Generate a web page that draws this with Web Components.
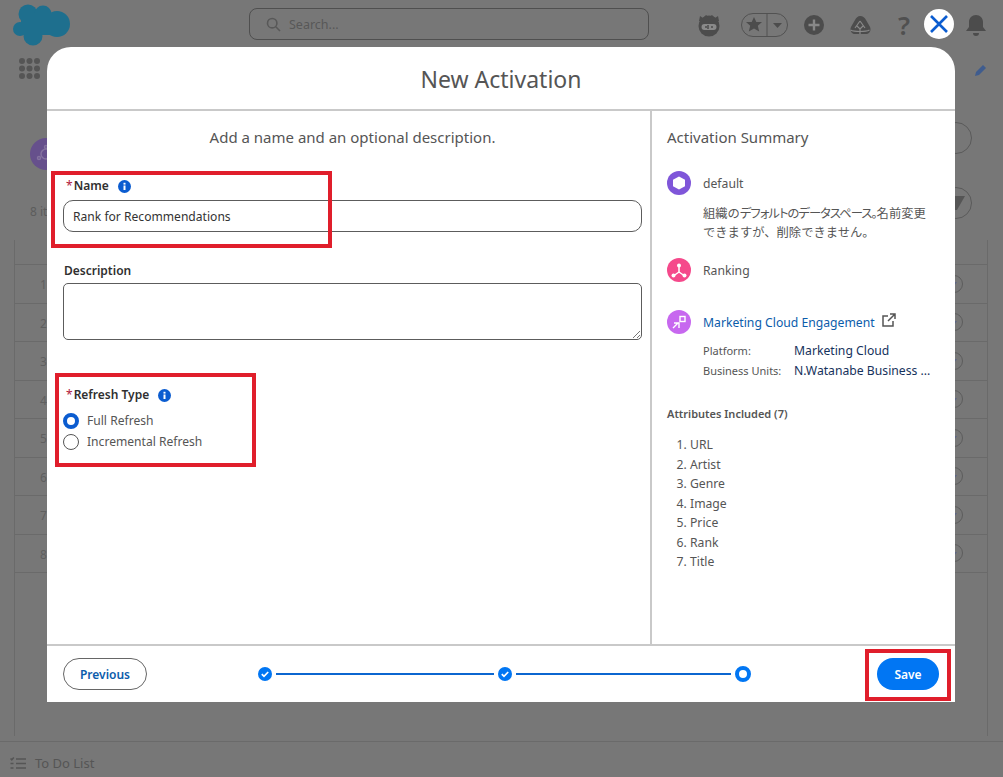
<!DOCTYPE html>
<html lang="en">
<head>
<meta charset="utf-8">
<title>New Activation</title>
<style>
  html, body { margin: 0; height: 100%; }
  body { background: #777; overflow: hidden; font-family: "Noto Sans", "Noto Sans CJK JP", sans-serif; }
</style>
</head>
<body>
<app-shell></app-shell>
<activation-modal>
  <activation-form slot="form"></activation-form>
  <activation-summary slot="summary"></activation-summary>
</activation-modal>

<script>
const appTemplate = document.createElement('template');
appTemplate.innerHTML = `
<style>
  :host { display: flex; flex-direction: column; height: 777px; color: #5a5a5a; font-size: 12.500px; }
  .top { height: 50px; display: flex; align-items: center; padding-left: 13px; box-sizing: border-box; }
  .logo { width: 58px; height: 46px; margin-top: -2px; flex: none; }
  .search { margin-left: 178px; width: 400px; height: 32px; border: 1px solid #4f4f4f; border-radius: 8px; display: flex; align-items: center; gap: 8px; padding-left: 16px; color: #585858; margin-top: -2px; box-sizing: border-box; flex: none; }
  .tools { margin-left: auto; margin-right: 16px; display: flex; align-items: center; }
  .nav { height: 38px; display: flex; align-items: center; padding-left: 19px; justify-content: space-between; padding-right: 16px; }
  .main { flex: 1; padding: 0 15px 5px 14px; display: flex; flex-direction: column; min-height: 0; }
  .head { height: 152px; flex: none; display: flex; justify-content: space-between; }
  .title { padding: 50px 0 0 16px; }
  .badge { width: 32px; height: 32px; border-radius: 50%; background: #66508c; display: flex; align-items: center; justify-content: center; }
  .count { margin-top: 33px; font-size: 12px; color: #5c5c5c; }
  .actions { padding: 34px 16px 0 0; display: flex; flex-direction: column; gap: 33px; }
  .round { width: 32px; height: 32px; border: 1px solid #5a5a5a; border-radius: 50%; box-sizing: border-box; display: flex; align-items: center; justify-content: center; }
  .table { flex: 1; border-left: 1px solid #6a6a6a; border-right: 1px solid #6a6a6a; }
  .caption { height: 24px; }
  .row { height: 37.500px; border-top: 1px solid #6a6a6a; display: flex; align-items: center; justify-content: space-between; padding: 0 24px 0 25px; font-size: 12px; color: #5f5f5f; box-sizing: content-box; }
  .row span { padding-top: 2px; }
  .row i { width: 18px; height: 18px; border: 1px solid #5c5c5c; border-radius: 50%; box-sizing: border-box; display: flex; align-items: center; justify-content: center; margin-left: auto; }
  .row i::after { content: ""; border: 3px solid transparent; border-top: 4px solid #5d6585; margin-top: 4px; }
  .bar { height: 36px; border-top: 1px solid #6a6a6a; display: flex; align-items: center; gap: 9px; padding: 7px 0 0 10px; box-sizing: border-box; color: #555; font-size: 13px; flex: none; }
</style>
<div class="top">
  <svg class="logo" viewBox="0 0 58 46" fill="#1e6f8e">
    <circle cx="15" cy="13" r="9.500"/><circle cx="30" cy="13" r="8.500"/><circle cx="44" cy="23" r="13"/>
    <circle cx="7" cy="28" r="7"/><circle cx="20" cy="35" r="9.500"/><rect x="8" y="12" width="36" height="22"/>
  </svg>
  <div class="search">
    <svg width="15" height="15" viewBox="0 0 15 15" fill="none" stroke="#585858" stroke-width="1.600"><circle cx="6.200" cy="6.200" r="4.700"/><path d="M9.800 9.800l4.200 4.200"/></svg>
    <span>Search...</span>
  </div>
  <div class="tools">
    <svg width="269" height="40" viewBox="0 -5 269 40">
      <circle cx="19" cy="16" r="10.500" fill="#4c4c4c"/>
      <path fill="#4c4c4c" d="M9 11l1-5 3 2 3-3 3 2 3-2 3 3 3-2 1 5z"/>
      <rect x="11.500" y="14" width="15" height="6" rx="3" fill="#8a8a8a"/><path d="M15 17h2M21 17h2M18 15v4" stroke="#4c4c4c" stroke-width="1.500"/>
      <rect x="51.500" y="3.500" width="46" height="23" rx="11.500" fill="none" stroke="#525252"/><path d="M77 3.500v23" stroke="#525252"/>
      <path fill="#4c4c4c" d="M64 7l2.300 5h5.700l-4.200 3.800 1.400 5.700-5.200-3-5.200 3 1.400-5.700-4.200-3.800h5.700z"/><path fill="#4c4c4c" d="M83 13h9l-4.500 5z"/>
      <circle cx="124" cy="15" r="10" fill="#4c4c4c"/><path d="M124 9.500v11M118.500 15h11" stroke="#888" stroke-width="2.400"/>
      <path fill="#4c4c4c" d="M170 6c3 0 5 2 6 4l3.500 6c2 3 1 7-2.500 8h-13c-3.500-1-4.500-5-2.500-8l3.500-6c1-2 3-4 5-4z"/>
      <path d="M170 11l-5 7M170 11l5 7M167 16l3 3 3-3M170 19v5M160.500 20c3 1.500 6 1.500 9.500 1.500s6.500 0 9.500-1.500" stroke="#888" stroke-width="1.200" fill="none"/>
      <text x="214" y="25" text-anchor="middle" font-size="26" font-weight="600" fill="#505050" font-family="Noto Sans">?</text>
    </svg>
    <svg width="22" height="24" viewBox="0 0 22 24" style="margin-left:6px"><path fill="#4c4c4c" d="M11 2c4 0 7 3 7 7v5l3 4H1l3-4V9c0-4 3-7 7-7zM8 20h6c0 2-1 3-3 3s-3-1-3-3z"/></svg>
  </div>
</div>
<div class="nav">
  <svg width="21" height="21" viewBox="0 0 21 21" fill="#555" style="margin-top:-1px">
    <circle cx="3" cy="3" r="3"/><circle cx="10.500" cy="3" r="3"/><circle cx="18" cy="3" r="3"/>
    <circle cx="3" cy="10.500" r="3"/><circle cx="10.500" cy="10.500" r="3"/><circle cx="18" cy="10.500" r="3"/>
    <circle cx="3" cy="18" r="3"/><circle cx="10.500" cy="18" r="3"/><circle cx="18" cy="18" r="3"/>
  </svg>
  <svg width="13" height="14" viewBox="0 0 13 14" style="margin-top:2px"><path fill="#3f5c8e" d="M1 13l1-4 7-7 3 3-7 7z"/></svg>
</div>
<div class="main">
  <div class="head">
    <div class="title">
      <div class="badge"><svg width="20" height="20" viewBox="0 0 20 20" fill="none" stroke="#84729f" stroke-width="1.500"><circle cx="10" cy="10" r="5"/><circle cx="10" cy="3" r="1.500"/><circle cx="3" cy="14" r="1.500"/><circle cx="17" cy="14" r="1.500"/></svg></div>
      <div class="count">8 items</div>
    </div>
    <div class="actions">
      <div class="round"></div>
      <div class="round"><svg width="18" height="14" viewBox="0 0 18 14"><path fill="#555" d="M0 0h18L10 14H8z"/></svg></div>
    </div>
  </div>
  <div class="table">
    <div class="caption"></div>
    <div class="row"><span>1</span><i></i></div><div class="row"><span>2</span><i></i></div><div class="row"><span>3</span><i></i></div><div class="row"><span>4</span><i></i></div>
    <div class="row"><span>5</span><i></i></div><div class="row"><span>6</span><i></i></div><div class="row"><span>7</span><i></i></div><div class="row"><span>8</span><i></i></div>
    <div class="row"></div>
  </div>
</div>
<div class="bar">
  <svg width="16" height="13" viewBox="0 0 16 13" fill="none" stroke="#555" stroke-width="1.500"><path d="M6 2h10M6 6.500h10M6 11h10M0.500 1.500l1.300 1.300 2-2.300M0.500 6.500h3M0.500 11h3"/></svg>
  <span>To Do List</span>
</div>`;

class AppShell extends HTMLElement {
  constructor() {
    super();
    this.attachShadow({mode: "open"});
    this.shadowRoot.appendChild(appTemplate.content.cloneNode(true));
  }
}
customElements.define("app-shell", AppShell);

const modalTemplate = document.createElement('template');
modalTemplate.innerHTML = `
<style>
  :host { position: absolute; left: 47px; top: 47px; width: 908px; height: 655px; display: flex; flex-direction: column; background: #fff; border-radius: 24px 24px 0 0; color: #444; }
  h1 { margin: 0; height: 62px; line-height: 64px; flex: none; text-align: center; font-size: 23px; font-weight: 400; color: #555; border-bottom: 2px solid #c9c9c9; }
  .body { flex: 1; display: flex; min-height: 0; }
  .left { width: 605px; flex: none; border-right: 2px solid #c9c9c9; box-sizing: border-box; }
  .right { flex: 1; }
  footer { height: 58px; flex: none; border-top: 2px solid #c9c9c9; display: flex; align-items: flex-start; padding: 12px 16px 0; box-sizing: border-box; justify-content: space-between; }
  button { font: 600 12px "Noto Sans", sans-serif; height: 32px; border-radius: 16px; }
  .prev { width: 84px; background: #fff; border: 1px solid #666; color: #0b5cab; }
  .save { width: 62px; background: #0176f3; border: 0; color: #fff; }
  .steps { display: flex; align-items: center; height: 32px; margin-left: -15px; }
  .line { height: 2px; background: #0b66d0; width: 218px; margin: 0 4px; }
  .line + svg + .line { width: 215px; }
  .ring { width: 16px; height: 16px; border-radius: 50%; border: 4px solid #0176f3; box-sizing: border-box; }
  .close { position: absolute; left: 877px; top: -38px; width: 30px; height: 30px; background: #fff; border-radius: 50%; display: flex; align-items: center; justify-content: center; }
  .mark { position: absolute; border: 4px solid #e01e2b; box-sizing: border-box; pointer-events: none; }
</style>
<h1>New Activation</h1>
<div class="body">
  <div class="left"><slot name="form"></slot></div>
  <div class="right"><slot name="summary"></slot></div>
</div>
<footer>
  <button class="prev">Previous</button>
  <div class="steps">
    <svg width="14" height="14" viewBox="0 0 14 14"><circle cx="7" cy="7" r="7" fill="#0176f3"/><path d="M3.800 7.200l2.200 2.200 4.200-4.400" fill="none" stroke="#fff" stroke-width="1.700"/></svg>
    <div class="line"></div>
    <svg width="14" height="14" viewBox="0 0 14 14"><circle cx="7" cy="7" r="7" fill="#0176f3"/><path d="M3.800 7.200l2.200 2.200 4.200-4.400" fill="none" stroke="#fff" stroke-width="1.700"/></svg>
    <div class="line"></div>
    <div class="ring"></div>
  </div>
  <button class="save">Save</button>
</footer>
<div class="close">
  <svg width="20" height="20" viewBox="0 0 20 20"><path d="M2 2l16 16M18 2L2 18" stroke="#0b5cd0" stroke-width="2.600" fill="none"/></svg>
</div>
<div class="mark" style="left:4px;top:124px;width:281px;height:77px"></div>
<div class="mark" style="left:8px;top:326px;width:201px;height:94px"></div>
<div class="mark" style="left:818px;top:602px;width:86px;height:52px"></div>`;

class ActivationModal extends HTMLElement {
  constructor() {
    super();
    this.attachShadow({mode: "open"});
    this.shadowRoot.appendChild(modalTemplate.content.cloneNode(true));
  }
}
customElements.define("activation-modal", ActivationModal);

const infoIcon = `<svg width="13" height="13" viewBox="0 0 13 13"><circle cx="6.500" cy="6.500" r="6.500" fill="#0b5cd0"/><rect x="5.500" y="5.500" width="2" height="4.500" fill="#fff"/><rect x="5.500" y="2.800" width="2" height="1.800" fill="#fff"/></svg>`;

const formTemplate = document.createElement('template');
formTemplate.innerHTML = `
<style>
  :host { display: block; padding: 15px 8px 0 16px; font-size: 12.100px; color: #444; }
  p { margin: 0 0 29px; text-align: center; font-size: 15px; line-height: 22px; color: #555; }
  label { display: flex; align-items: center; gap: 9px; font-weight: 600; font-size: 12px; line-height: 18px; color: #303030; height: 18px; }
  label span { display: inline-flex; gap: 1px; }
  label b { color: #b0183c; font-weight: 400; padding-left: 3px; }
  .input { height: 32px; margin: 5px 0 30px; border: 1px solid #5c5c5c; border-radius: 10px; display: flex; align-items: center; padding-left: 9px; color: #333; box-sizing: border-box; }
  .desc-label { padding-left: 1px; }
  .area { height: 57px; margin: 3px 0 46px; border: 1px solid #5c5c5c; border-radius: 5px; position: relative; box-sizing: border-box; }
  .area svg { position: absolute; right: 1px; bottom: 1px; }
  .radio { display: flex; align-items: center; gap: 8px; height: 21px; color: #555; }
  .radio i { width: 16px; height: 16px; border-radius: 50%; border: 1px solid #555; box-sizing: border-box; }
  .radio i.on { border: 4px solid #0b5cd0; }
  .radios { margin-top: 6px; }
</style>
<p>Add a name and an optional description.</p>
<label><span><b>*</b>Name</span>${infoIcon}</label>
<div class="input">Rank for Recommendations</div>
<label class="desc-label">Description</label>
<div class="area"><svg width="8" height="8" viewBox="0 0 8 8"><path d="M1 8l7-7M5 8l3-3" stroke="#777"/></svg></div>
<label><span><b>*</b>Refresh Type</span>${infoIcon}</label>
<div class="radios">
  <div class="radio"><i class="on"></i>Full Refresh</div>
  <div class="radio"><i></i>Incremental Refresh</div>
</div>`;

class ActivationForm extends HTMLElement {
  constructor() {
    super();
    this.attachShadow({mode: "open"});
    this.shadowRoot.appendChild(formTemplate.content.cloneNode(true));
  }
}
customElements.define("activation-form", ActivationForm);

const summaryTemplate = document.createElement('template');
summaryTemplate.innerHTML = `
<style>
  :host { display: block; padding: 15px 16px 0 15px; font-size: 12.200px; color: #555; }
  h2 { margin: 0 0 23px; font-size: 15px; font-weight: 400; line-height: 22px; color: #555; }
  .item { display: flex; align-items: center; gap: 12px; height: 24px; }
  .desc { margin: 9px 0 16px 36px; font-size: 12.300px; line-height: 19px; font-family: "Noto Sans CJK JP", sans-serif; white-space: nowrap; }
  .desc span { font-feature-settings: "palt"; letter-spacing: -0.950px; }
  a { color: #0b5cab; text-decoration: none; }
  .link { display: flex; align-items: center; gap: 7px; }
  .meta { margin: 7px 0 24px 36px; display: grid; grid-template-columns: 91px 1fr; line-height: 20px; }
  .meta span { font-size: 11px; color: #555; }
  .meta strong { font-weight: 400; color: #16325c; white-space: nowrap; }
  h3 { margin: 0 0 12px; font-size: 11px; font-weight: 600; line-height: 18px; color: #555; }
  ol { margin: 0; padding: 0 0 0 23px; line-height: 19.500px; }
</style>
<h2>Activation Summary</h2>
<div class="item">
  <svg width="24" height="24" viewBox="0 0 24 24"><circle cx="12" cy="12" r="12" fill="#7f56d9"/><path fill="#fff" d="M12 5.500l6 3.300v6.400l-6 3.300-6-3.300V8.800z"/></svg>
  <span>default</span>
</div>
<div class="desc">組織の<span>デフォルトのデータスペース。</span>名前変更<br>できますが、削除できません。</div>
<div class="item" style="margin-bottom:28px">
  <svg width="24" height="24" viewBox="0 0 24 24"><circle cx="12" cy="12" r="12" fill="#f5498b"/><path d="M12 7.500v6.500M12 14l-5 3.500M12 14l5 3.500" stroke="#fff" stroke-width="1.500" fill="none"/><circle cx="12" cy="7.500" r="2" fill="#fff"/><circle cx="6.500" cy="17.500" r="2" fill="#fff"/><circle cx="17.500" cy="17.500" r="2" fill="#fff"/></svg>
  <span>Ranking</span>
</div>
<div class="item">
  <svg width="24" height="24" viewBox="0 0 24 24"><circle cx="12" cy="12" r="12" fill="#c768ef"/><rect x="13" y="6.500" width="5" height="5" fill="none" stroke="#fff" stroke-width="1.400"/><path d="M6 18l5.500-5.500M7 13h5v5" stroke="#fff" stroke-width="1.400" fill="none"/></svg>
  <span class="link"><a href="#">Marketing Cloud Engagement</a>
    <svg width="14" height="14" viewBox="0 0 14 14" fill="none" stroke="#555" stroke-width="1.500" style="margin-top:-4px"><path d="M6 3H1v10h10V8M8 1h5v5M13 1L6 8"/></svg>
  </span>
</div>
<div class="meta">
  <span>Platform:</span><strong>Marketing Cloud</strong>
  <span>Business Units:</span><strong>N.Watanabe Business ...</strong>
</div>
<h3>Attributes Included (7)</h3>
<ol><li>URL</li><li>Artist</li><li>Genre</li><li>Image</li><li>Price</li><li>Rank</li><li>Title</li></ol>`;

class ActivationSummary extends HTMLElement {
  constructor() {
    super();
    this.attachShadow({mode: "open"});
    this.shadowRoot.appendChild(summaryTemplate.content.cloneNode(true));
  }
}
customElements.define("activation-summary", ActivationSummary);
</script>
</body>
</html>
